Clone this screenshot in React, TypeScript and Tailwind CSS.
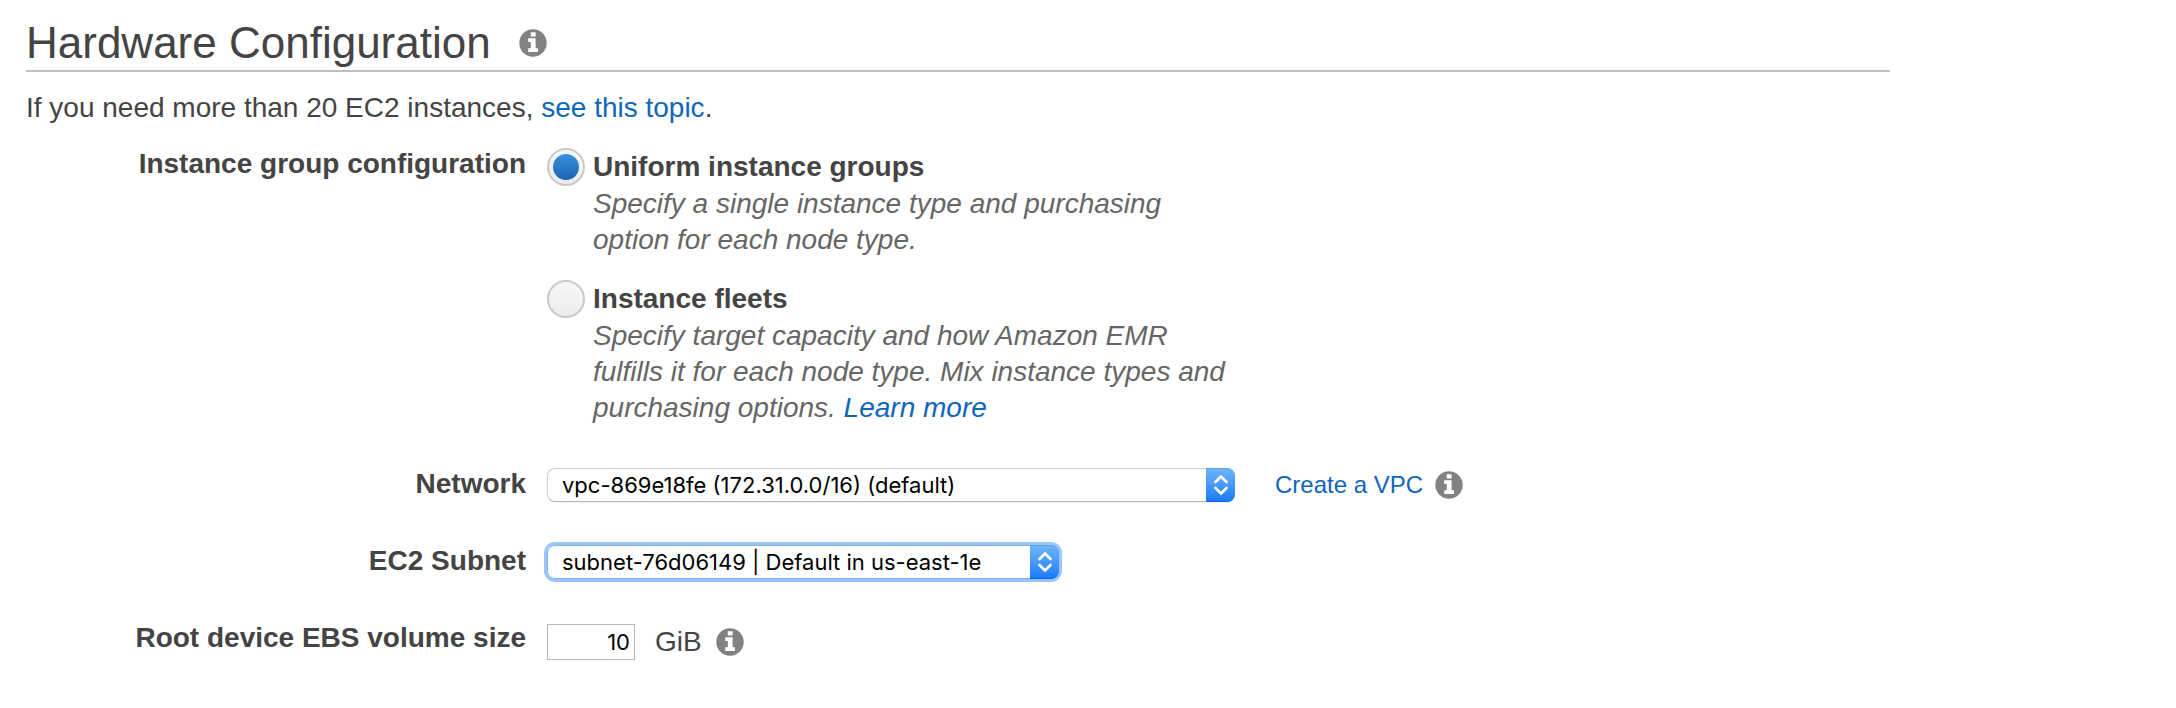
import { useState, type ReactNode } from "react";

function InfoIcon({ label }: { label: string }) {
  return (
    <button type="button" aria-label={label} className="block shrink-0">
      <svg viewBox="0 0 28 28" className="size-7" aria-hidden="true">
        <circle cx="14" cy="14" r="13.7" fill="#828282" />
        <path
          fill="#fff"
          d="M11.8 3.2h4.8v4.4h-4.8zM9.2 9.2h7.4v10h2.4v3.8H9.2v-3.8h2.6V13H9.2z"
        />
      </svg>
    </button>
  );
}

function Row({ label, children }: { label: ReactNode; children: ReactNode }) {
  return (
    <div className="grid min-h-[37px] grid-cols-[500px_1fr] gap-x-[21px]">
      <div className="text-right text-[28px] leading-9 font-bold">{label}</div>
      <div className="pt-0.5">{children}</div>
    </div>
  );
}

function Option(props: {
  id: string;
  title: string;
  checked: boolean;
  onSelect: () => void;
  children: ReactNode;
}) {
  return (
    <div className="flex gap-2">
      <input
        type="radio"
        name="instance-group"
        id={props.id}
        checked={props.checked}
        onChange={props.onSelect}
        className="grid size-[38px] shrink-0 appearance-none place-items-center rounded-full border-2 border-[#c9c9c9] bg-linear-to-b from-[#f7f7f7] to-[#ececec] before:size-[26px] before:rounded-full before:bg-linear-to-b before:from-[#3c8ede] before:to-[#1b66b5] before:opacity-0 before:content-[''] checked:before:opacity-100"
      />
      <div>
        <label htmlFor={props.id} className="block text-[28px] leading-[38px] font-bold">
          {props.title}
        </label>
        <p className="max-w-[650px] text-[28px] leading-9 text-[#666] italic">{props.children}</p>
      </div>
    </div>
  );
}

function Select({ id, value, className }: { id: string; value: string; className: string }) {
  const focused = id === "subnet";
  return (
    <div
      className={`relative h-[34px] rounded-lg ${className} ${
        focused ? "ring-3 ring-[#9ac7f8]" : ""
      }`}
    >
      <select
        id={id}
        className={`block h-full w-full appearance-none rounded-lg border bg-white pr-9 pl-3.5 font-[Inter,sans-serif] text-[22px] leading-7 text-black outline-none ${
          focused ? "border-[#7fb2ea]" : "border-[#cfcfcf] border-b-[#b4b4b4] shadow-xs"
        }`}
      >
        <option>{value}</option>
      </select>
      <span className="pointer-events-none absolute inset-y-0 right-0 grid w-[29px] place-items-center rounded-r-lg border-y border-t-[#5ba3ee] border-b-[#1263f5] bg-linear-to-b from-[#6db3f8] to-[#157cfc]">
        <svg viewBox="0 0 14 22" className="h-[22px] w-3.5" aria-hidden="true">
          <path
            d="M1.5 8 7 2.5 12.5 8M1.5 14 7 19.5 12.5 14"
            fill="none"
            stroke="#fff"
            strokeWidth="2.6"
            strokeLinecap="round"
            strokeLinejoin="round"
          />
        </svg>
      </span>
    </div>
  );
}

export default function App() {
  const [group, setGroup] = useState("uniform");
  return (
    <main className="min-h-screen bg-white pt-[18px] pr-[286px] pb-12 pl-[26px] font-['Liberation_Sans',Arial,sans-serif] text-[#444]">
      <header className="flex items-center gap-7 border-b-2 border-[#bfbfbf] pb-0.5">
        <h1 className="text-[44px] leading-[50px]">Hardware Configuration</h1>
        <InfoIcon label="About hardware configuration" />
      </header>

      <p className="mt-[18px] text-[28px] leading-9">
        If you need more than 20 EC2 instances,{" "}
        <a href="#limits" className="text-[#1166bb]">
          see this topic
        </a>
        .
      </p>

      <form className="mt-5 flex flex-col gap-10">
        <Row label={<span id="group-label">Instance group configuration</span>}>
          <div role="radiogroup" aria-labelledby="group-label" className="flex flex-col gap-[22px]">
            <Option
              id="uniform"
              title="Uniform instance groups"
              checked={group === "uniform"}
              onSelect={() => setGroup("uniform")}
            >
              Specify a single instance type and purchasing option for each node type.
            </Option>
            <Option
              id="fleets"
              title="Instance fleets"
              checked={group === "fleets"}
              onSelect={() => setGroup("fleets")}
            >
              Specify target capacity and how Amazon EMR fulfills it for each node type. Mix instance
              types and purchasing options.{" "}
              <a href="#fleets" className="text-[#1166bb]">
                Learn more
              </a>
            </Option>
          </div>
        </Row>

        <Row label={<label htmlFor="network">Network</label>}>
          <div className="flex items-center">
            <Select id="network" value="vpc-869e18fe (172.31.0.0/16) (default)" className="w-[688px]" />
            <a href="#vpc" className="mr-3 ml-10 text-[24px] leading-[34px] text-[#1166bb]">
              Create a VPC
            </a>
            <InfoIcon label="About networks" />
          </div>
        </Row>

        <Row label={<label htmlFor="subnet">EC2 Subnet</label>}>
          <Select id="subnet" value="subnet-76d06149 | Default in us-east-1e" className="w-[512px]" />
        </Row>

        <Row label={<label htmlFor="volume">Root device EBS volume size</label>}>
          <div className="flex min-h-10 items-center">
            <input
              id="volume"
              type="text"
              defaultValue="10"
              className="h-9 w-[88px] border border-[#b8b8b8] bg-white pr-1 text-right font-[Inter,sans-serif] text-[22px] text-black outline-none"
            />
            <span className="mr-3.5 ml-5 text-[28px] leading-9">GiB</span>
            <InfoIcon label="About root volume size" />
          </div>
        </Row>
      </form>
    </main>
  );
}
